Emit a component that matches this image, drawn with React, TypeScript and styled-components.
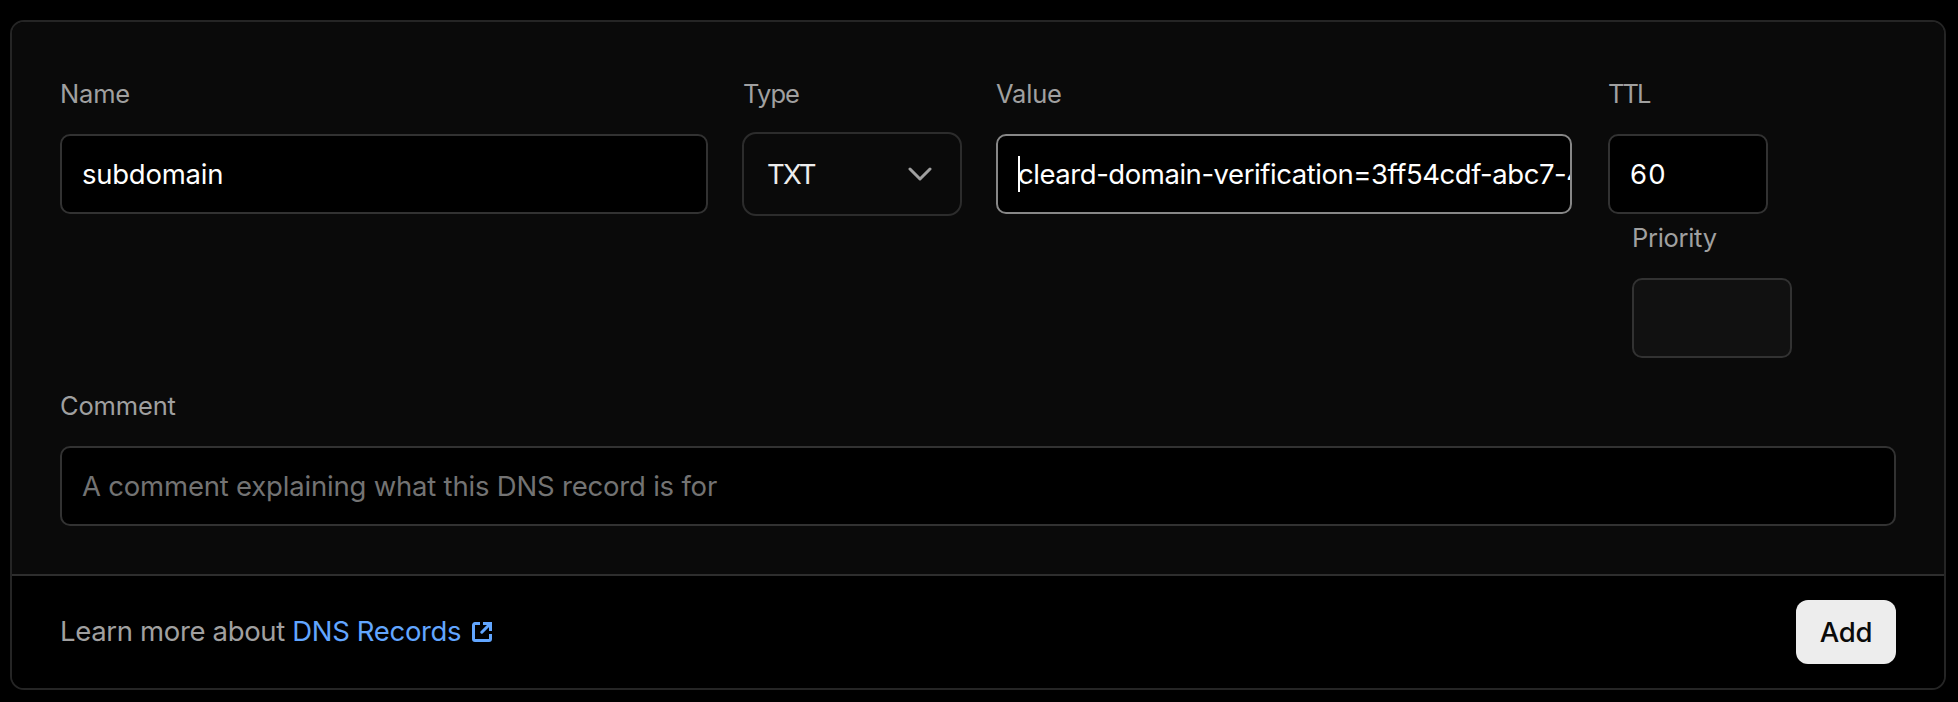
import React from 'react';
import styled, { createGlobalStyle } from 'styled-components';

const GlobalStyle = createGlobalStyle`
  * { box-sizing: border-box; }
  html, body { margin: 0; background: #000; }
  body {
    font-family: Inter, "Liberation Sans", sans-serif;
    -webkit-font-smoothing: antialiased;
  }
`;

const Page = styled.main`
  width: 1958px;
  height: 702px;
  padding: 20px 12px 12px 10px;
  background: #000;
  overflow: hidden;
`;

const Card = styled.form`
  display: flex;
  flex-direction: column;
  height: 670px;
  border: 2px solid #252525;
  border-radius: 14px;
  overflow: hidden;
  background: #000;
`;

const Body = styled.section`
  display: flex;
  flex-direction: column;
  gap: 24px;
  padding: 48px;
  background: #0a0a0a;
`;

const Row = styled.div`
  display: flex;
  align-items: flex-start;
`;

const Field = styled.div<{ $width?: number; $before?: number }>`
  position: relative;
  display: flex;
  flex-direction: column;
  width: ${(p) => (p.$width ? `${p.$width}px` : 'auto')};
  margin-left: ${(p) => p.$before ?? 0}px;
`;

const Label = styled.label<{ $tight?: boolean; $tracking?: number }>`
  height: 48px;
  margin-bottom: ${(p) => (p.$tight ? 14 : 16)}px;
  padding-left: ${(p) => (p.$tight ? 1 : 0)}px;
  font-size: 25.5px;
  line-height: 48px;
  letter-spacing: ${(p) => p.$tracking ?? 0}px;
  color: #a0a0a0;
  white-space: nowrap;
`;

const Input = styled.input<{ $active?: boolean; $tracking?: number }>`
  width: 100%;
  height: 80px;
  padding: 0 0 0 20px;
  border: 2px solid ${(p) => (p.$active ? '#878787' : '#323232')};
  border-radius: 10px;
  outline: none;
  background: #000;
  color: #fff;
  font-family: inherit;
  font-size: 27.5px;
  letter-spacing: ${(p) => p.$tracking ?? 0}px;

  &::placeholder { color: #737373; opacity: 1; }
  &:disabled { background: #111; }
`;

const Caret = styled.span`
  position: absolute;
  left: 22px;
  bottom: 22px;
  width: 2px;
  height: 36px;
  background: #fff;
`;

const Select = styled.button`
  display: flex;
  align-items: center;
  justify-content: space-between;
  height: 84px;
  padding: 0 28px 0 23px;
  border: 2px solid #2c2c2c;
  border-radius: 14px;
  background: #0a0a0a;
  color: #ededed;
  font-family: inherit;
  font-size: 27.5px;
  letter-spacing: -1.8px;
`;

const Footer = styled.footer`
  display: flex;
  align-items: center;
  justify-content: space-between;
  height: 114px;
  padding: 0 48px;
  border-top: 2px solid #2e2e2e;
  background: #000;
`;

const Hint = styled.p`
  display: flex;
  align-items: center;
  margin: 0;
  padding-bottom: 2px;
  font-size: 27.5px;
  line-height: 40px;
  letter-spacing: -0.34px;
  color: #a0a0a0;
  white-space: pre;
`;

const DocsLink = styled.a`
  display: inline-flex;
  align-items: center;
  gap: 11px;
  color: #62a6ff;
  text-decoration: none;

  svg { margin-top: 2px; }
`;

const AddButton = styled.button`
  width: 100px;
  height: 64px;
  padding: 0;
  border: 0;
  border-radius: 12px;
  background: #ededed;
  color: #0a0a0a;
  font-family: inherit;
  font-size: 27.5px;
  font-weight: 500;
  letter-spacing: -0.3px;
`;

const ChevronIcon = () => (
  <svg width="24" height="14" viewBox="0 0 24 14" fill="none" stroke="#a0a0a0" strokeWidth="3" strokeLinecap="round" strokeLinejoin="round">
    <path d="M2 2L12 12L22 2" />
  </svg>
);

const ExternalIcon = () => (
  <svg width="20" height="20" viewBox="0 0 20 20" fill="none" stroke="currentColor" strokeWidth="3">
    <path d="M8 1.5H3A1.5 1.5 0 0 0 1.5 3V17A1.5 1.5 0 0 0 3 18.5H17A1.5 1.5 0 0 0 18.5 17V12" />
    <path d="M11 1.5H18.5V9" />
    <path d="M18 2L9.8 10.2" strokeLinecap="round" />
  </svg>
);

export default function App() {
  return (
    <>
      <GlobalStyle />
      <Page>
        <Card onSubmit={(e) => e.preventDefault()}>
          <Body>
            <Row>
              <Field $width={648}>
                <Label htmlFor="name" $tracking={-0.2}>Name</Label>
                <Input id="name" defaultValue="subdomain" $tracking={-0.25} />
              </Field>
              <Field $width={220} $before={34}>
                <Label htmlFor="type" $tight $tracking={-0.9}>Type</Label>
                <Select id="type" type="button">TXT<ChevronIcon /></Select>
              </Field>
              <Field $width={576} $before={34}>
                <Label htmlFor="value" $tracking={-0.2}>Value</Label>
                <Input id="value" $active defaultValue="cleard-domain-verification=3ff54cdf-abc7-4" $tracking={-0.45} />
                <Caret />
              </Field>
              <Field $before={36}>
                <Field $width={160}>
                  <Label htmlFor="ttl" $tracking={-1.9}>TTL</Label>
                  <Input id="ttl" defaultValue="60" $tracking={1.2} />
                </Field>
                <Field $width={160} $before={24}>
                  <Label htmlFor="priority" $tracking={-0.3}>Priority</Label>
                  <Input id="priority" disabled />
                </Field>
              </Field>
            </Row>
            <Field>
              <Label htmlFor="comment" $tracking={-0.15}>Comment</Label>
              <Input id="comment" placeholder="A comment explaining what this DNS record is for" $tracking={-0.2} />
            </Field>
          </Body>
          <Footer>
            <Hint>
              <span>Learn more about </span>
              <DocsLink href="#"><span>DNS Records</span><ExternalIcon /></DocsLink>
            </Hint>
            <AddButton type="submit">Add</AddButton>
          </Footer>
        </Card>
      </Page>
    </>
  );
}
